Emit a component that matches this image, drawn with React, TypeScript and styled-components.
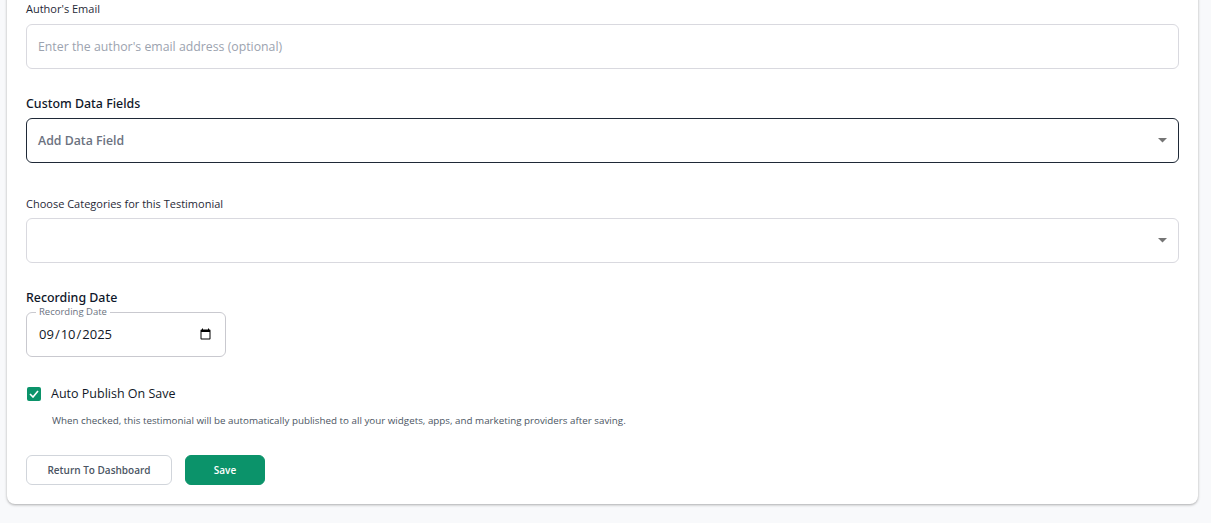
import React, { FC, useState } from 'react';
import { styled, createGlobalStyle } from 'styled-components';

const GlobalStyle = createGlobalStyle`
  html, body {
    margin: 0;
    padding: 0;
    background: #f8f9fb;
    font-family: 'Open Sans', 'Noto Sans', sans-serif;
    color: #1f2937;
  }
  * { box-sizing: border-box; }
`;

const Caret: FC = () => (
  <svg width='9' height='5' viewBox='0 0 9 5' aria-hidden>
    <path d='M0 0 L9 0 L4.5 4.5 Z' fill='#757575' />
  </svg>
);

const App: FC = () => {
  const [autoPublish, setAutoPublish] = useState(true);
  const [date, setDate] = useState('2025-09-10');

  return (
    <>
      <GlobalStyle />
      <SPage>
        <SCard>
          <SField $gap='8px'>
            <SSmallLabel>Author&apos;s Email</SSmallLabel>
            <STextInput placeholder="Enter the author's email address (optional)" />
          </SField>

          <SField $top='26px' $gap='5px'>
            <SSectionLabel>Custom Data Fields</SSectionLabel>
            <SSelectBox $active>
              <SSelectText>Add Data Field</SSelectText>
              <Caret />
            </SSelectBox>
          </SField>

          <SField $top='33px' $gap='7px'>
            <SSmallLabel>Choose Categories for this Testimonial</SSmallLabel>
            <SSelectBox>
              <span />
              <Caret />
            </SSelectBox>
          </SField>

          <SField $top='26px' $gap='0px'>
            <SSectionLabel>Recording Date</SSectionLabel>
            <SDateWrap>
              <legend>Recording Date</legend>
              <SDateInput type='date' value={date} onChange={(e) => setDate(e.target.value)} />
            </SDateWrap>
          </SField>

          <SCheckRow>
            <SCheckBox $checked={autoPublish} onClick={() => setAutoPublish(!autoPublish)}>
              {autoPublish && (
                <svg width='10' height='8' viewBox='0 0 10 8'>
                  <path d='M1 4 L4 7 L9 1' fill='none' stroke='#fff' strokeWidth='1.6' />
                </svg>
              )}
            </SCheckBox>
            <span>Auto Publish On Save</span>
          </SCheckRow>
          <SHelp>
            When checked, this testimonial will be automatically published to all your widgets, apps, and marketing
            providers after saving.
          </SHelp>

          <SActions>
            <SButton>Return To Dashboard</SButton>
            <SButton $primary>Save</SButton>
          </SActions>
        </SCard>
      </SPage>
    </>
  );
};

export default App;

const SPage = styled.div`
  padding: 0 13px 18px 7px;
  min-height: 523px;
`;

const SCard = styled.div`
  margin-top: -10px;
  padding: 11px 19px 19px 19px;
  background: #fff;
  border-radius: 8px;
  box-shadow: 0 1px 3px rgba(0, 0, 0, 0.25), 0 1px 2px rgba(0, 0, 0, 0.08);
`;

const SField = styled.div<{ $top?: string; $gap?: string }>`
  display: flex;
  flex-direction: column;
  gap: ${({ $gap }) => $gap || '7px'};
  margin-top: ${({ $top }) => $top || '0'};
`;

const SSmallLabel = styled.label`
  font-size: 11px;
  font-weight: 500;
  color: #1f2937;
  line-height: 15px;
`;

const SSectionLabel = styled.div`
  font-family: 'Noto Sans', 'Open Sans', sans-serif;
  font-size: 12.4px;
  font-weight: 500;
  color: #0f172a;
  line-height: 18px;
`;

const STextInput = styled.input`
  width: 100%;
  height: 45px;
  padding: 0 11px;
  border: 1px solid #d9d9df;
  border-radius: 6px;
  font-family: inherit;
  font-size: 12.3px;
  color: #1f2937;
  outline: none;

  &::placeholder {
    color: #9ca3af;
  }
`;

const SSelectBox = styled.div<{ $active?: boolean }>`
  display: flex;
  align-items: center;
  justify-content: space-between;
  height: 45px;
  padding: 0 11px 0 11px;
  border: 1px solid ${({ $active }) => ($active ? '#1f2937' : '#d9d9df')};
  border-radius: 6px;
  cursor: pointer;
`;

const SSelectText = styled.span`
  font-size: 12.3px;
  font-weight: 600;
  color: #6b7280;
`;

const SDateWrap = styled.fieldset`
  width: 200px;
  height: 50px;
  margin: 0;
  padding: 0 11px 0 11px;
  border: 1px solid #c9c9cf;
  border-radius: 6px;

  legend {
    margin-left: -2px;
    padding: 0 3px;
    font-size: 9.5px;
    line-height: 10px;
    color: #6b7280;
  }
`;

const SDateInput = styled.input`
  width: 100%;
  height: 34px;
  margin-top: 0;
  border: none;
  padding: 0;
  outline: none;
  font-family: inherit;
  font-size: 13px;
  color: #111827;
  background: transparent;
`;

const SCheckRow = styled.label`
  display: flex;
  align-items: center;
  gap: 10px;
  margin-top: 28px;
  font-size: 12.5px;
  color: #111827;
`;

const SCheckBox = styled.span<{ $checked: boolean }>`
  display: inline-flex;
  align-items: center;
  justify-content: center;
  width: 14px;
  height: 14px;
  margin-left: 1px;
  border-radius: 2px;
  background: ${({ $checked }) => ($checked ? '#0b936a' : '#fff')};
  border: ${({ $checked }) => ($checked ? 'none' : '1px solid #9ca3af')};
  cursor: pointer;
`;

const SHelp = styled.p`
  margin: 12px 0 0 26px;
  font-size: 9.8px;
  color: #4b5563;
`;

const SActions = styled.div`
  display: flex;
  gap: 13px;
  margin-top: 28px;
`;

const SButton = styled.button<{ $primary?: boolean }>`
  height: 30px;
  width: ${({ $primary }) => ($primary ? '80px' : '146px')};
  padding: 0;
  border-radius: 6px;
  border: 1px solid ${({ $primary }) => ($primary ? '#0b936a' : '#d1d5db')};
  background: ${({ $primary }) => ($primary ? '#0b936a' : '#fff')};
  color: ${({ $primary }) => ($primary ? '#fff' : '#4b5563')};
  font-family: inherit;
  font-size: 10px;
  font-weight: 600;
  cursor: pointer;
`;
